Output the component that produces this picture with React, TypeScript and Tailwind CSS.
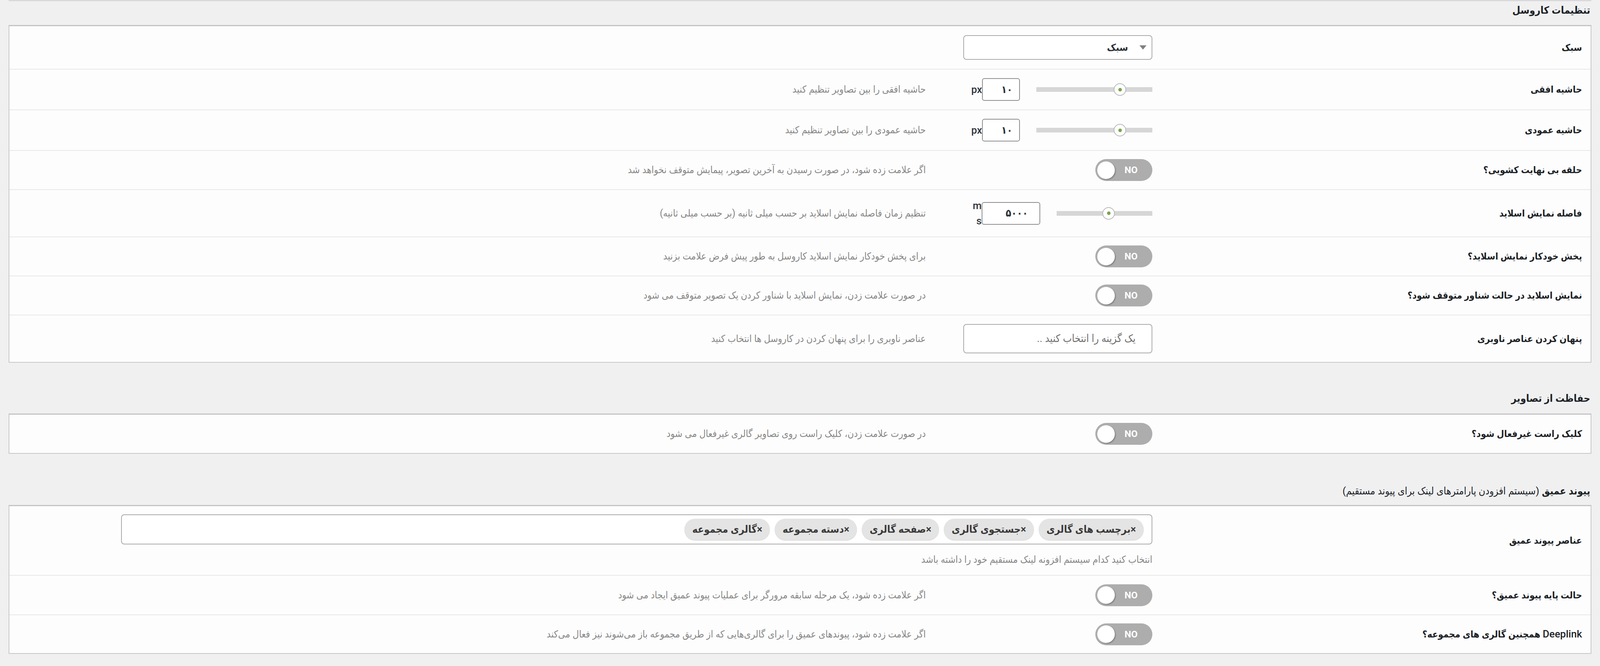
import React from "react";

const FONT = "font-['Roboto','DejaVu_Sans_Condensed','DejaVu_Sans',sans-serif]";

function Label({ children }: { children: React.ReactNode }) {
  return (
    <div className="w-[1122px] shrink-0 pr-[22px] text-right text-[24px] font-bold text-[#1d2327]">
      {children}
    </div>
  );
}

function Desc({ children }: { children: React.ReactNode }) {
  return (
    <div className="flex-1 pr-[96px] text-right text-[25px] text-[#878787]">{children}</div>
  );
}

function Toggle() {
  return (
    <div dir="ltr" className="flex h-[56px] w-[146px] items-center rounded-full bg-[#adadad] pl-[5px]">
      <div className="h-[45px] w-[45px] shrink-0 rounded-full bg-white shadow-[2px_2px_3px_rgba(0,0,0,0.28)]" />
      <div className="flex-1 pr-[13px] text-center text-[24px] font-bold text-white">NO</div>
    </div>
  );
}

function Slider({
  trackW,
  thumbLeft,
  inputW,
  value,
  unit,
}: {
  trackW: string;
  thumbLeft: number;
  inputW: string;
  value: string;
  unit: React.ReactNode;
}) {
  return (
    <div className="flex items-center">
      <div dir="ltr" className={`relative h-[12px] bg-[#d6d6d6] ${trackW}`}>
        <div
          className="absolute top-[-10px] flex h-[32px] w-[32px] items-center justify-center rounded-full border-2 border-[#b9b9b9] bg-white"
          style={{ left: thumbLeft }}
        >
          <div className="h-[9px] w-[9px] rounded-full bg-[#7aa64a]" />
        </div>
      </div>
      <div
        className={`mr-[42px] flex h-[58px] items-center justify-center rounded-[6px] border-2 border-[#8e8e8e] bg-white pl-[30px] text-[26px] font-bold text-[#2c3338] ${inputW}`}
      >
        {value}
      </div>
      {unit}
    </div>
  );
}

function Row({
  h,
  label,
  control,
  desc,
  last,
}: {
  h: string;
  label: React.ReactNode;
  control?: React.ReactNode;
  desc?: React.ReactNode;
  last?: boolean;
}) {
  return (
    <div className={`flex items-center ${h} ${last ? "" : "border-b-2 border-[#e8e8e8]"}`}>
      <Label>{label}</Label>
      <div className="flex w-[484px] shrink-0 justify-start">{control}</div>
      <Desc>{desc}</Desc>
    </div>
  );
}

function Panel({ children }: { children: React.ReactNode }) {
  return (
    <div className="border-2 border-t-[3px] border-[#c8c8ca] border-t-[#c4c4c6] bg-[#fdfdfd]">{children}</div>
  );
}

function Chip({ children }: { children: React.ReactNode }) {
  return (
    <div className="flex h-[55px] items-center rounded-full bg-[#e4e4e4] px-[20px] text-[26px] font-bold text-[#3a3a3a] shadow-[0_1px_0_#d0d0d0]">
      <span>×</span>
      <span>{children}</span>
    </div>
  );
}

const unitCls = "text-[26px] font-medium text-[#2c3338]";

export default function App() {
  return (
    <div dir="rtl" className={`min-h-screen w-full bg-[#f0f0f1] ${FONT}`}>
      <div className="mx-[22px]">
        <div className="h-[3px] bg-[#d9d9db]" />

        <h2 className="mb-[15px] h-[46px] pr-[3px] text-right text-[26px] font-bold leading-[46px] text-[#1d2327]">
          تنظیمات کاروسل
        </h2>
        <Panel>
          <Row
            h="h-[111px]"
            label="سبک"
            control={
              <div className="flex h-[63px] w-[484px] items-center rounded-[8px] border-2 border-[#ababab] bg-white pr-[13px]">
                <svg width="18" height="11" viewBox="0 0 18 11">
                  <path d="M0 0 L18 0 L9 11 Z" fill="#808080" />
                </svg>
                <span className="mr-[29px] text-[25px] font-bold text-[#2c3338]">سبک</span>
              </div>
            }
          />
          <Row
            h="h-[104px]"
            label="حاشیه افقی"
            control={
              <Slider
                trackW="w-[297px]"
                thumbLeft={198}
                inputW="w-[97px]"
                value="۱۰"
                unit={<span className={unitCls}>px</span>}
              />
            }
            desc="حاشیه افقی را بین تصاویر تنظیم کنید"
          />
          <Row
            h="h-[104px]"
            label="حاشیه عمودی"
            control={
              <Slider
                trackW="w-[297px]"
                thumbLeft={198}
                inputW="w-[97px]"
                value="۱۰"
                unit={<span className={unitCls}>px</span>}
              />
            }
            desc="حاشیه عمودی را بین تصاویر تنظیم کنید"
          />
          <Row
            h="h-[100px]"
            label="حلقه بی نهایت کشویی؟"
            control={<Toggle />}
            desc="اگر علامت زده شود، در صورت رسیدن به آخرین تصویر، پیمایش متوقف نخواهد شد"
          />
          <Row
            h="h-[121px]"
            label="فاصله نمایش اسلاید"
            control={
              <Slider
                trackW="w-[245px]"
                thumbLeft={117}
                inputW="w-[150px]"
                value="۵۰۰۰"
                unit={
                  <span dir="ltr" className="w-[24px] break-all text-right text-[26px] font-medium leading-[39px] text-[#2c3338]">
                    ms
                  </span>
                }
              />
            }
            desc="تنظیم زمان فاصله نمایش اسلاید بر حسب میلی ثانیه (بر حسب میلی ثانیه)"
          />
          <Row
            h="h-[100px]"
            label="پخش خودکار نمایش اسلاید؟"
            control={<Toggle />}
            desc="برای پخش خودکار نمایش اسلاید کاروسل به طور پیش فرض علامت بزنید"
          />
          <Row
            h="h-[100px]"
            label="نمایش اسلاید در حالت شناور متوقف شود؟"
            control={<Toggle />}
            desc="در صورت علامت زدن، نمایش اسلاید با شناور کردن یک تصویر متوقف می شود"
          />
          <Row
            h="h-[119px]"
            last
            label="پنهان کردن عناصر ناوبری"
            control={
              <div className="flex h-[75px] w-[484px] items-center rounded-[8px] border-2 border-[#ababab] bg-white pr-[41px] text-[27px] text-[#707070]">
                یک گزینه را انتخاب کنید ..
              </div>
            }
            desc="عناصر ناوبری را برای پنهان کردن در کاروسل ها انتخاب کنید"
          />
        </Panel>

        <h2 className="mb-[16px] mt-[68px] h-[46px] pr-[3px] text-right text-[26px] font-bold leading-[46px] text-[#1d2327]">
          حفاظت از تصاویر
        </h2>
        <Panel>
          <Row
            h="h-[98px]"
            last
            label="کلیک راست غیرفعال شود؟"
            control={<Toggle />}
            desc="در صورت علامت زدن، کلیک راست روی تصاویر گالری غیرفعال می شود"
          />
        </Panel>

        <h2 className="mb-[13px] mt-[72px] h-[46px] pr-[3px] text-right text-[26px] font-bold leading-[46px] text-[#1d2327]">
          پیوند عمیق <span className="font-normal">(سیستم افزودن پارامترهای لینک برای پیوند مستقیم)</span>
        </h2>
        <Panel>
          <div className="flex h-[178px] items-center border-b-2 border-[#e8e8e8]">
            <Label>عناصر پیوند عمیق</Label>
            <div className="flex w-[2640px] shrink-0 flex-col items-stretch pb-[21px] pt-[22px]">
              <div className="flex h-[77px] items-center gap-[12px] rounded-[8px] border-2 border-[#ababab] bg-white pr-[20px]">
                <Chip>برچسب های گالری</Chip>
                <Chip>جستجوی گالری</Chip>
                <Chip>صفحه گالری</Chip>
                <Chip>دسته مجموعه</Chip>
                <Chip>گالری مجموعه</Chip>
              </div>
              <div className="mt-[20px] text-right text-[25px] leading-[38px] text-[#878787]">
                انتخاب کنید کدام سیستم افزونه لینک مستقیم خود را داشته باشد
              </div>
            </div>
          </div>
          <Row
            h="h-[101px]"
            label="حالت پایه پیوند عمیق؟"
            control={<Toggle />}
            desc="اگر علامت زده شود، یک مرحله سابقه مرورگر برای عملیات پیوند عمیق ایجاد می شود"
          />
          <Row
            h="h-[97px]"
            last
            label={
              <>
                <span className="text-[26px] font-medium">Deeplink</span> همچنین گالری های مجموعه؟
              </>
            }
            control={<Toggle />}
            desc="اگر علامت زده شود، پیوندهای عمیق را برای گالری‌هایی که از طریق مجموعه باز می‌شوند نیز فعال می‌کند"
          />
        </Panel>
      </div>
    </div>
  );
}
